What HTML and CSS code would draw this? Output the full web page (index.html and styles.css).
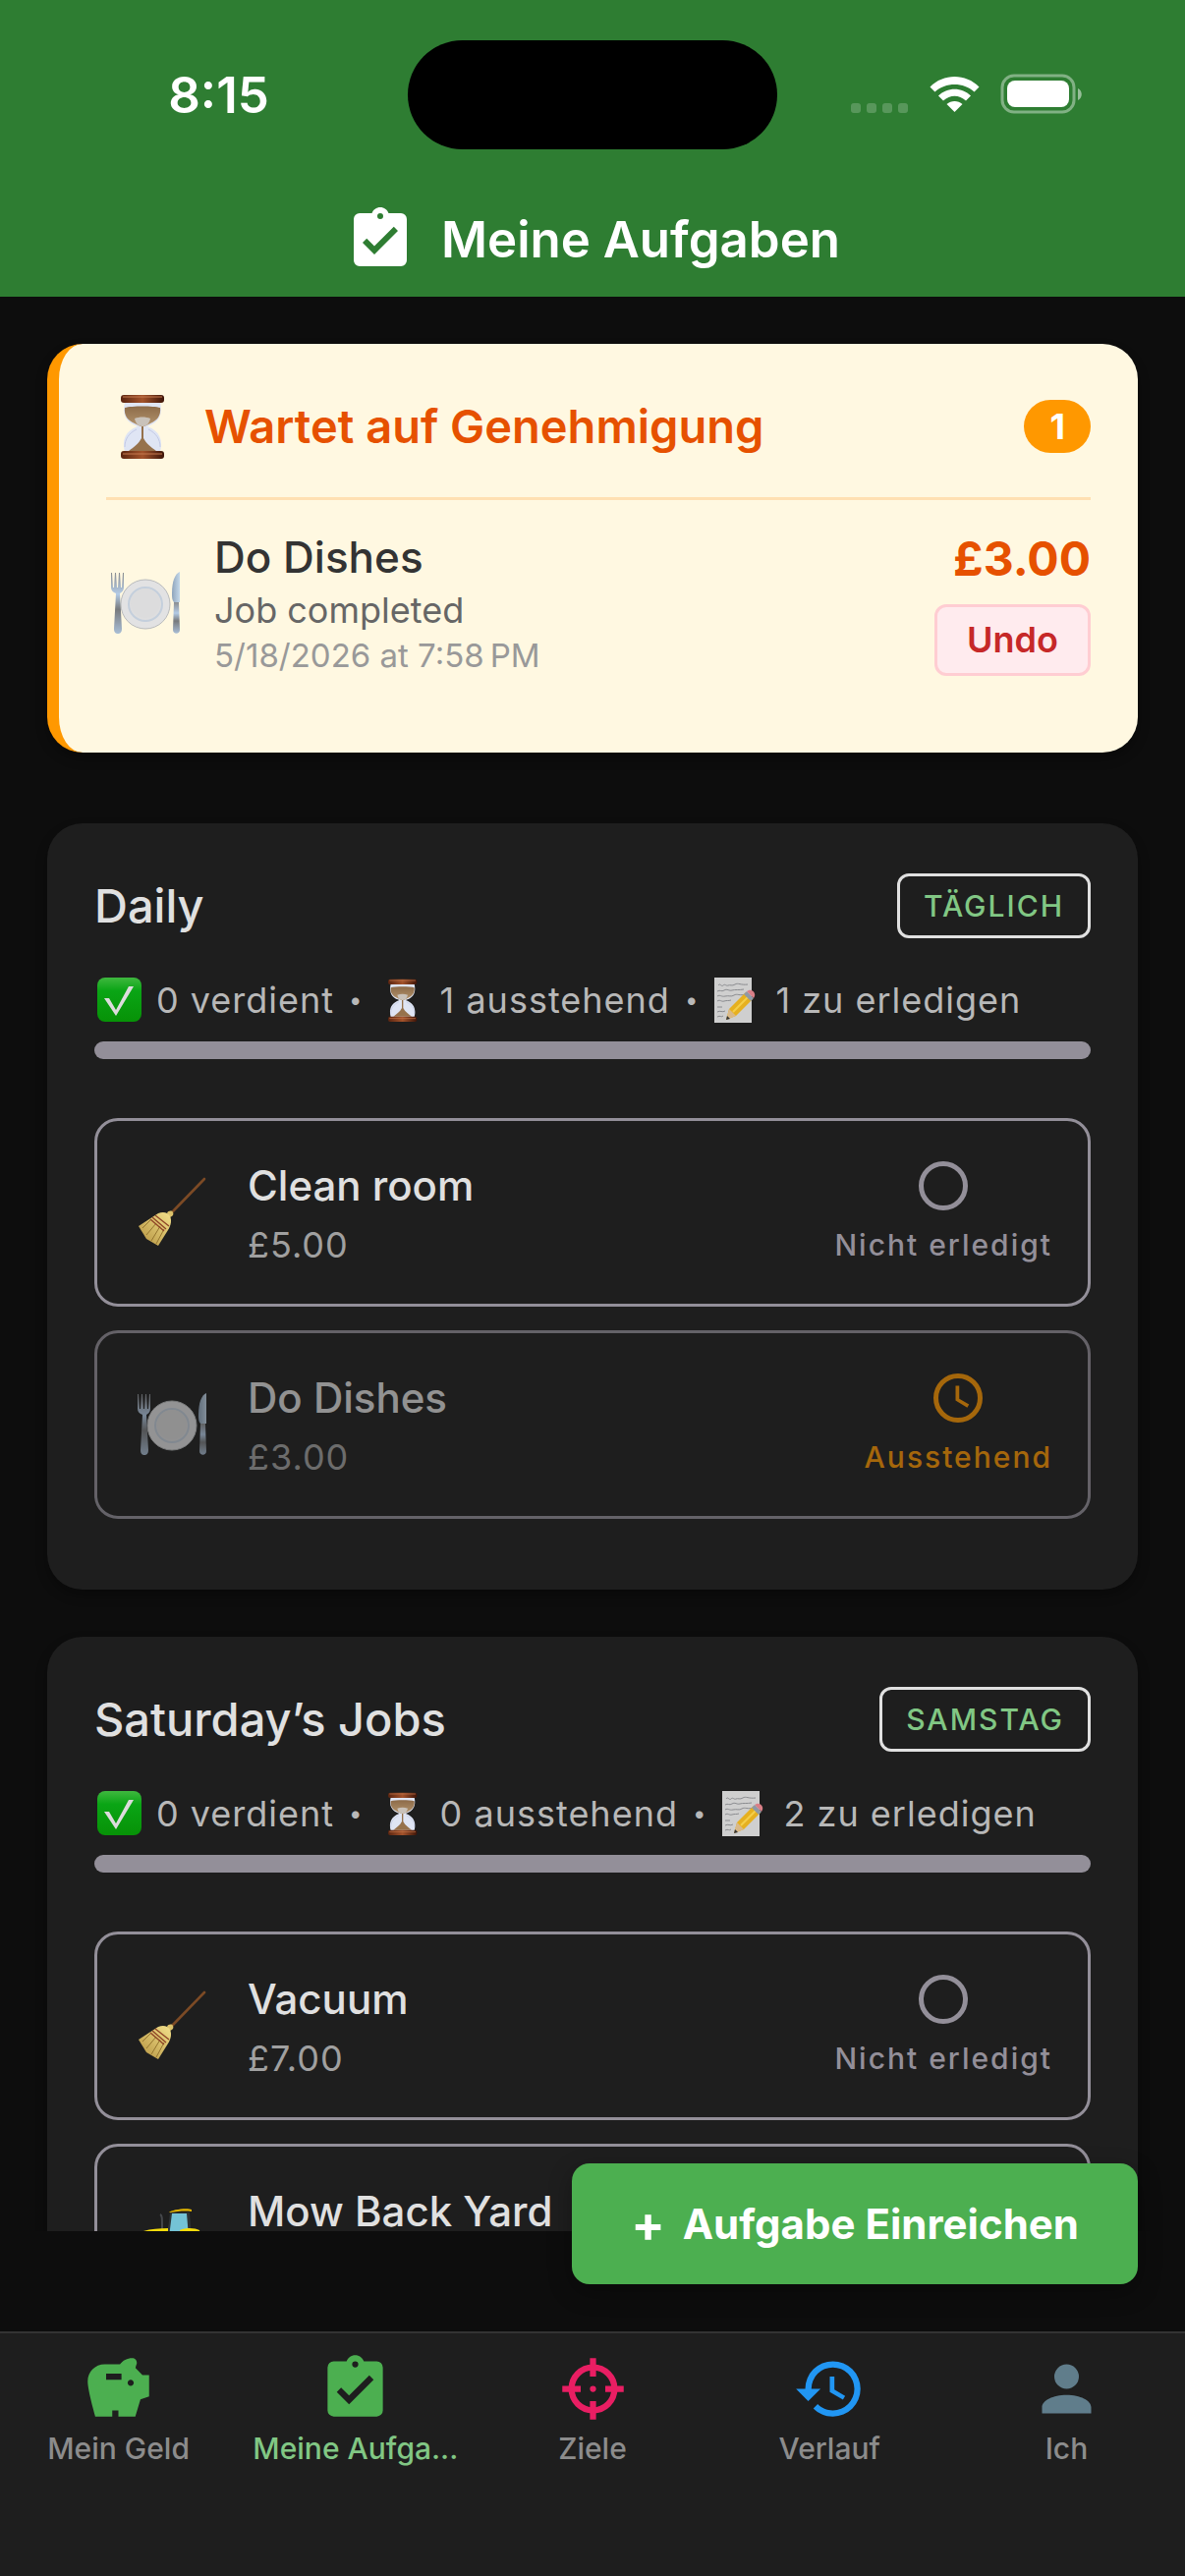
FILE: index.html
```html
<!DOCTYPE html>
<html lang="de">
<head>
  <meta charset="UTF-8">
  <meta name="viewport" content="width=device-width, initial-scale=1">
  <title>Meine Aufgaben</title>
  <link rel="stylesheet" href="styles.css">
</head>
<body>

  <!-- Shared icons -->
  <svg class="sprite" aria-hidden="true">
    <defs>
      <linearGradient id="wood" x1="0" x2="1" y1="0" y2="0">
        <stop offset="0" stop-color="#5a2410"/><stop offset=".5" stop-color="#a3532b"/><stop offset="1" stop-color="#3d1408"/>
      </linearGradient>
      <linearGradient id="sand" x1="0" x2="0" y1="0" y2="1">
        <stop offset="0" stop-color="#8d6b49"/><stop offset="1" stop-color="#b3946d"/>
      </linearGradient>
      <linearGradient id="metal" x1="0" x2="0" y1="0" y2="1">
        <stop offset="0" stop-color="#8b8d90"/><stop offset=".35" stop-color="#b3cbe6"/><stop offset=".6" stop-color="#77797c"/><stop offset="1" stop-color="#a9bed6"/>
      </linearGradient>
      <linearGradient id="blade" x1="0" x2="1" y1="0" y2="0">
        <stop offset="0" stop-color="#8ea4bb"/><stop offset="1" stop-color="#c4d8ea"/>
      </linearGradient>
      <linearGradient id="straw" x1="0" x2="1" y1="1" y2="0">
        <stop offset="0" stop-color="#b3913f"/><stop offset="1" stop-color="#f3e08a"/>
      </linearGradient>
      <linearGradient id="leaf" x1="0" x2="0" y1="0" y2="1">
        <stop offset="0" stop-color="#3fb83f"/><stop offset=".3" stop-color="#0aa515"/><stop offset="1" stop-color="#079207"/>
      </linearGradient>
    </defs>

    <symbol id="icon-hourglass" viewBox="0 0 72 72">
      <path d="M19 11h36c3 13-1 21-13 25 13 5 16 14 13 26H19c-3-12 0-21 13-26-12-4-16-12-13-25z" fill="#dfe5f4"/>
      <path d="M19 17c7-2 29-2 36 0 1 8-3 13-10 16l-6 3h-4l-6-3c-7-3-11-8-10-16z" fill="url(#sand)"/>
      <path d="M29 28c5-2 11-2 16 0-1 5-4 8-8 8s-7-3-8-8z" fill="#c9c2ba"/>
      <path d="M36 36h2v12c3 6 8 9 13 13H23c5-4 10-7 13-13z" fill="#96724c"/>
      <path d="M19 57c0-8 4-14 12-18M55 57c0-8-4-14-12-18" fill="none" stroke="#c3cae6" stroke-width="1"/>
      <rect x="15" y="4" width="44" height="8" rx="3" fill="url(#wood)"/>
      <rect x="15" y="61" width="44" height="8" rx="3" fill="url(#wood)"/>
      <path d="M17 6h40M17 64h40" stroke="#c57a50" stroke-width="1"/>
    </symbol>

    <symbol id="icon-dishes" viewBox="0 0 80 80">
      <circle cx="40" cy="41" r="25" fill="#e2e2e3" stroke="#b9bbbd" stroke-width="1"/>
      <circle cx="40" cy="41" r="17" fill="#dededf" stroke="#c4cfdc" stroke-width="2"/>
      <circle cx="40" cy="40" r="15" fill="#dcdcdd"/>
      <path d="M5 24V9h1l1 15h1l1-15h1l1 15h1l1-15h1l1 15h1l1-15h1v15c0 3-2 5-4 6l2 36c0 4-2 5-4 5s-4-1-4-5l2-36c-3-1-5-3-5-6z" fill="url(#metal)"/>
      <path d="M75 8c-5 2-8 10-8 22 0 4 0 7 2 9h6z" fill="url(#blade)"/>
      <path d="M69 39h5l1 28c0 5-7 5-7 0z" fill="url(#metal)"/>
    </symbol>

    <symbol id="icon-broom" viewBox="0 0 80 80">
      <path d="M73 6 40 40" stroke="#7c4a25" stroke-width="2.6" stroke-linecap="round"/>
      <path d="M35 41c1-3 5-3 6-1 1 2 0 4-3 5z" fill="#dcc26b"/>
      <path d="M26 41c5-2 10-1 12 3 2 4 1 9-2 14l-10 16L14 67 6 54z" fill="url(#straw)"/>
      <path d="m10 56 9-9M14 63l10-12M19 69l9-15M24 72l8-15" stroke="#94752f" stroke-width="1"/>
      <path d="m23 43 14 11M20 45l14 12M18 47l14 12" fill="none" stroke="#8f4527" stroke-width="1.4"/>
    </symbol>

    <symbol id="icon-tractor" viewBox="0 0 80 80">
      <path d="M28 16c2 1 2 3 2 15" fill="none" stroke="#45474a" stroke-width="2"/>
      <path d="M38 14h20l2 26H35z" fill="#2d3235"/>
      <path d="M40 15h15l2 24H37z" fill="#74c3d6"/>
      <path d="M37 14c2-3 19-5 23-3v2c-7-1-15 0-22 1z" fill="#e6b800"/>
      <path d="M8 34c8-3 18-4 28-4v18c10 0 12-9 12-16 7-3 16-2 20 0l4 20H8z" fill="#f5dc0b"/>
      <circle cx="57" cy="54" r="17" fill="#35383b"/>
      <circle cx="57" cy="54" r="8" fill="#e6b800"/>
      <circle cx="19" cy="60" r="11" fill="#35383b"/>
      <circle cx="19" cy="60" r="5" fill="#e6b800"/>
    </symbol>

    <symbol id="icon-earned" viewBox="0 0 48 48">
      <rect x="3" y="1" width="45" height="45" rx="8" fill="url(#leaf)"/>
      <path d="M10 22h5l7 12L35 10h5L22 40z" fill="#dcdcdc"/>
    </symbol>

    <symbol id="icon-memo" viewBox="0 0 48 48">
      <rect x="1" y="1" width="38" height="46" fill="#cfcfcf"/>
      <path d="M5 9c2-3 3 2 5 0s3 1 5 0 4 1 7-1 6 1 13 0M4 15c3-2 4 1 7-1s5 1 8 0 7 0 12-1M4 20c3-2 4 1 8 0s6 1 9-1 6 1 12-1M4 25c3-2 4 1 7 0s4 0 7-1M4 31h5M4 36c3-2 5 1 8-1M4 41c3-2 4 1 6-1" fill="none" stroke="#8b8c90" stroke-width="1"/>
      <path d="m13 44 3-11 17-17 7 7-17 17z" fill="#e6b020"/>
      <path d="m20 36 17-17" stroke="#f5cf4a" stroke-width="2"/>
      <path d="m13 44 3-11 7 7z" fill="#d9b98a"/>
      <path d="m13 44 1-4 3 3z" fill="#333"/>
      <path d="m31 18 3-3 7 7-3 3z" fill="#8f99a5"/>
      <path d="m34 15 2-1c4-1 7 3 6 6l-1 2z" fill="#d97f87"/>
    </symbol>

    <symbol id="icon-clipboard" viewBox="0 0 24 24">
      <path d="M10,17L6,13L7.41,11.59L10,14.17L16.59,7.58L18,9M12,3A1,1 0 0,1 13,4A1,1 0 0,1 12,5A1,1 0 0,1 11,4A1,1 0 0,1 12,3M19,3H14.82C14.4,1.84 13.3,1 12,1C10.7,1 9.6,1.84 9.18,3H5A2,2 0 0,0 3,5V19A2,2 0 0,0 5,21H19A2,2 0 0,0 21,19V5A2,2 0 0,0 19,3Z" fill="currentColor"/>
    </symbol>

    <symbol id="icon-circle" viewBox="0 0 24 24">
      <circle cx="12" cy="12" r="9" fill="none" stroke="currentColor" stroke-width="2"/>
    </symbol>

    <symbol id="icon-clock" viewBox="0 0 24 24">
      <circle cx="12" cy="12" r="9" fill="none" stroke="currentColor" stroke-width="2"/>
      <path d="M12.5 7H11v6l4.75 2.85.75-1.23-4-2.37z" fill="currentColor"/>
    </symbol>
  </svg>

  <!-- Header -->
  <header class="header">
    <div class="status-bar">
      <span class="time">8:15</span>
      <div class="island"></div>
      <svg class="status-icons" viewBox="0 0 236 40" role="img" aria-label="WLAN, Akku voll">
        <g fill="#fff">
          <g opacity=".2">
            <rect x="0" y="28" width="10" height="10" rx="3"/>
            <rect x="16" y="28" width="10" height="10" rx="3"/>
            <rect x="32" y="28" width="10" height="10" rx="3"/>
            <rect x="48" y="28" width="10" height="10" rx="3"/>
          </g>
          <path d="M80.500 11.500C94 -2.500 117 -2.500 130.500 11.500L125.500 16.500C115 6.500 96 6.500 85.500 16.500z"/>
          <path d="M89 20.500C98 11.500 113 11.500 122 20.500L117 25.500C110 19 101 19 94 25.500z"/>
          <path d="M97.500 29C102 25 109 25 113.500 29L105.500 37z"/>
          <rect x="159" y="5" width="63" height="27" rx="8"/>
          <rect x="154" y="0" width="73" height="37" rx="12" fill="none" stroke="#fff" stroke-width="3" opacity=".4"/>
          <path d="M231 13c5 2 5 10 0 12z" opacity=".5"/>
        </g>
      </svg>
    </div>
    <div class="title-row">
      <svg class="title-icon"><use href="#icon-clipboard"/></svg>
      <h1>Meine Aufgaben</h1>
    </div>
  </header>

  <div class="screen">
    <main class="content">

      <!-- Waiting for approval -->
      <section class="card pending">
        <div class="pending-head">
          <svg class="pending-icon"><use href="#icon-hourglass"/></svg>
          <h2>Wartet auf Genehmigung</h2>
          <span class="count">1</span>
        </div>
        <div class="pending-row">
          <svg class="job-icon"><use href="#icon-dishes"/></svg>
          <div class="pending-info">
            <h3>Do Dishes</h3>
            <p class="note">Job completed</p>
            <p class="date">5/18/2026 at 7:58&#8239;PM</p>
          </div>
          <div class="pending-side">
            <span class="amount">£3.00</span>
            <button type="button" class="undo">Undo</button>
          </div>
        </div>
      </section>

      <!-- Daily -->
      <section class="card group">
        <div class="group-head">
          <h2>Daily</h2>
          <span class="tag">TÄGLICH</span>
        </div>
        <div class="stats">
          <svg><use href="#icon-earned"/></svg>
          <span>0 verdient</span>
          <span class="dot">•</span>
          <svg><use href="#icon-hourglass"/></svg>
          <span>1 ausstehend</span>
          <span class="dot">•</span>
          <svg><use href="#icon-memo"/></svg>
          <span>1 zu erledigen</span>
        </div>
        <div class="progress"></div>
        <ul class="jobs">
          <li class="job">
            <svg class="job-icon"><use href="#icon-broom"/></svg>
            <div class="job-info">
              <h3>Clean room</h3>
              <p>£5.00</p>
            </div>
            <div class="job-status">
              <svg><use href="#icon-circle"/></svg>
              <span>Nicht erledigt</span>
            </div>
          </li>
          <li class="job waiting">
            <svg class="job-icon"><use href="#icon-dishes"/></svg>
            <div class="job-info">
              <h3>Do Dishes</h3>
              <p>£3.00</p>
            </div>
            <div class="job-status">
              <svg><use href="#icon-clock"/></svg>
              <span>Ausstehend</span>
            </div>
          </li>
        </ul>
      </section>

      <!-- Saturday -->
      <section class="card group">
        <div class="group-head">
          <h2>Saturday’s Jobs</h2>
          <span class="tag">SAMSTAG</span>
        </div>
        <div class="stats">
          <svg><use href="#icon-earned"/></svg>
          <span>0 verdient</span>
          <span class="dot">•</span>
          <svg><use href="#icon-hourglass"/></svg>
          <span>0 ausstehend</span>
          <span class="dot">•</span>
          <svg><use href="#icon-memo"/></svg>
          <span>2 zu erledigen</span>
        </div>
        <div class="progress"></div>
        <ul class="jobs">
          <li class="job">
            <svg class="job-icon"><use href="#icon-broom"/></svg>
            <div class="job-info">
              <h3>Vacuum</h3>
              <p>£7.00</p>
            </div>
            <div class="job-status">
              <svg><use href="#icon-circle"/></svg>
              <span>Nicht erledigt</span>
            </div>
          </li>
          <li class="job">
            <svg class="job-icon"><use href="#icon-tractor"/></svg>
            <div class="job-info">
              <h3>Mow Back Yard</h3>
            </div>
          </li>
        </ul>
      </section>
    </main>

    <button type="button" class="submit-job"><span class="plus">+</span>Aufgabe Einreichen</button>
  </div>

  <!-- Tabs -->
  <nav class="tabs">
    <a href="#geld" class="tab money">
      <svg viewBox="0 0 24 24"><path d="M19.830 7.500L17.560 5.230C17.630 4.810 17.740 4.420 17.880 4.080C17.960 3.900 18 3.710 18 3.500C18 2.670 17.330 2 16.500 2C14.860 2 13.410 2.790 12.500 4H7.500C4.460 4 2 6.460 2 9.500S4.500 21 4.500 21H10V19H12V21H17.500L19.180 15.410L22 14.470V7.500H19.830M13 9H8V7H13V9M16 11C15.450 11 15 10.550 15 10C15 9.450 15.450 9 16 9C16.550 9 17 9.450 17 10C17 10.550 16.550 11 16 11Z" fill="currentColor"/></svg>
      <span>Mein Geld</span>
    </a>
    <a href="#aufgaben" class="tab tasks active">
      <svg><use href="#icon-clipboard"/></svg>
      <span>Meine Aufga...</span>
    </a>
    <a href="#ziele" class="tab goals">
      <svg viewBox="0 0 24 24" fill="none" stroke="currentColor" stroke-width="2">
        <circle cx="12" cy="12" r="7"/>
        <path d="M12 2v6M12 16v6M2 12h6M16 12h6"/>
        <circle cx="12" cy="12" r="1" fill="currentColor" stroke="none"/>
      </svg>
      <span>Ziele</span>
    </a>
    <a href="#verlauf" class="tab history">
      <svg viewBox="0 0 24 24"><path d="M13.500,8H12V13L16.280,15.540L17,14.330L13.500,12.250V8M13,3A9,9 0 0,0 4,12H1L4.960,16.030L9,12H6A7,7 0 0,1 13,5A7,7 0 0,1 20,12A7,7 0 0,1 13,19C11.070,19 9.320,18.210 8.060,16.940L6.640,18.360C8.270,20 10.500,21 13,21A9,9 0 0,0 22,12A9,9 0 0,0 13,3" fill="currentColor"/></svg>
      <span>Verlauf</span>
    </a>
    <a href="#ich" class="tab me">
      <svg viewBox="0 0 24 24"><path d="M12,4A4,4 0 0,1 16,8A4,4 0 0,1 12,12A4,4 0 0,1 8,8A4,4 0 0,1 12,4M12,14C16.420,14 20,15.790 20,18V20H4V18C4,15.790 7.580,14 12,14Z" fill="currentColor"/></svg>
      <span>Ich</span>
    </a>
  </nav>

</body>
</html>
```
FILE: styles.css
```css
:root {
  --header-green: #2e7d32;
  --green: #4caf50;
  --light-green: #81c784;
  --bg: #0d0d0d;
  --surface: #1e1e1e;
  --outline: #938f99;
  --text: #e0e0e0;
}
* { margin: 0; padding: 0; box-sizing: border-box; }
body {
  font-family: Inter, "Liberation Sans", sans-serif;
  background: var(--bg);
  color: var(--text);
  height: 100vh;
  display: flex;
  flex-direction: column;
  overflow: hidden;
}
svg { display: block; flex-shrink: 0; }
.sprite { position: absolute; width: 0; height: 0; }

/* Header */
.header { background: var(--header-green); color: white; }
.status-bar {
  display: grid;
  grid-template-columns: 1fr 376px 1fr;
  align-items: center;
  justify-items: center;
  padding: 41px 30px 0;
}
.time { font-size: 51px; font-weight: 600; line-height: 60px; }
.island { width: 100%; height: 111px; border-radius: 56px; background: black; }
.status-icons { width: 236px; height: 40px; overflow: visible; }
.title-row {
  display: flex;
  align-items: center;
  justify-content: center;
  gap: 26px;
  padding: 56px 48px 22px;
}
.title-icon { width: 72px; height: 72px; }
.title-row h1 { font-size: 51px; font-weight: 600; line-height: 72px; }

/* Scroll area */
.screen {
  position: relative;
  flex: 1;
  min-height: 0;
  padding-bottom: 102px;
}
.content { height: 100%; overflow: hidden; padding: 48px 48px 0; }
.card {
  border-radius: 36px;
  padding: 48px;
  margin-bottom: 48px;
  background: var(--surface);
  box-shadow: 0 6px 12px rgba(0, 0, 0, 0.3);
}

/* Pending card */
.pending {
  background: #fff8e1;
  border-left: 12px solid #ff9800;
  margin-bottom: 72px;
}
.pending-head {
  display: flex;
  align-items: center;
  gap: 28px;
  padding-bottom: 36px;
  border-bottom: 3px solid #ffe0b2;
}
.pending-icon { width: 72px; height: 72px; }
.pending-head h2 { flex: 1; font-size: 47px; font-weight: 600; line-height: 72px; color: #e65100; }
.count {
  padding: 0 26px;
  border-radius: 30px;
  background: #ff9800;
  color: white;
  font-size: 36px;
  font-weight: 700;
  line-height: 54px;
}
.pending-row { display: flex; align-items: center; gap: 30px; padding: 28px 0; }
.job-icon { width: 80px; height: 80px; }
.pending-info { flex: 1; }
.pending-info h3 { font-size: 44px; font-weight: 500; line-height: 60px; color: #333; }
.note { font-size: 36px; line-height: 48px; color: #666; }
.date { font-size: 33px; line-height: 45px; color: #999; }
.pending-side { display: flex; flex-direction: column; align-items: flex-end; gap: 16px; }
.amount { font-size: 48px; font-weight: 700; line-height: 60px; color: #e65100; }
.undo {
  padding: 12px 30px;
  border: 3px solid #ffcdd2;
  border-radius: 12px;
  background: #ffebee;
  color: #c62828;
  font: 600 36px/43px Inter, "Liberation Sans", sans-serif;
}

/* Job groups */
.group-head { display: flex; align-items: center; justify-content: space-between; margin-bottom: 36px; }
.group-head h2 { font-size: 47px; font-weight: 500; line-height: 72px; }
.tag {
  padding: 0 24px;
  border: 3px solid var(--text);
  border-radius: 12px;
  color: var(--light-green);
  font-size: 30px;
  font-weight: 500;
  line-height: 60px;
  letter-spacing: 2px;
}
.stats {
  display: flex;
  align-items: center;
  gap: 15px;
  margin-bottom: 18px;
  font-size: 36px;
  line-height: 48px;
  letter-spacing: 1px;
  color: #b8b8b8;
  white-space: nowrap;
}
.stats svg { width: 48px; height: 48px; }
.stats .dot { font-size: 24px; }
.progress { height: 18px; border-radius: 9px; background: var(--outline); margin-bottom: 60px; }
.jobs { list-style: none; }
.job {
  display: flex;
  align-items: center;
  gap: 37px;
  min-height: 192px;
  margin-bottom: 24px;
  padding: 36px;
  border: 3px solid var(--outline);
  border-radius: 24px;
}
.job.waiting { opacity: 0.6; }
.job-info { flex: 1; display: flex; flex-direction: column; gap: 6px; min-height: 114px; }
.job-info h3 { font-size: 42px; font-weight: 500; line-height: 60px; }
.job-info p { font-size: 36px; line-height: 48px; letter-spacing: 1px; color: #a0a0a0; }
.job-status { display: flex; flex-direction: column; align-items: center; gap: 6px; color: var(--outline); }
.job-status svg { width: 60px; height: 60px; }
.job-status span { font-size: 30px; font-weight: 500; line-height: 48px; letter-spacing: 2px; }
.waiting .job-status { color: #ff9800; }

.submit-job {
  position: absolute;
  right: 48px;
  bottom: 48px;
  display: flex;
  align-items: center;
  gap: 18px;
  padding: 0 60px;
  border: none;
  border-radius: 18px;
  background: var(--green);
  color: white;
  font: 700 42px/123px Inter, "Liberation Sans", sans-serif;
  box-shadow: 0 8px 24px rgba(0, 0, 0, 0.3);
}
.plus { font-size: 51px; }

/* Tabs */
.tabs {
  display: flex;
  padding: 19px 0 112px;
  border-top: 2px solid #333;
  background: var(--surface);
}
.tab {
  flex: 1 1 0;
  min-width: 0;
  display: flex;
  flex-direction: column;
  align-items: center;
  gap: 5px;
  text-decoration: none;
}
.tab svg { width: 75px; height: 75px; }
.tab span { font-size: 30px; font-weight: 500; line-height: 36px; color: #8c8c8c; white-space: nowrap; }
.tab.active span { color: var(--light-green); }
.money, .tasks { color: var(--green); }
.goals { color: #e91e63; }
.history { color: #2196f3; }
.me { color: #607d8b; }
```
